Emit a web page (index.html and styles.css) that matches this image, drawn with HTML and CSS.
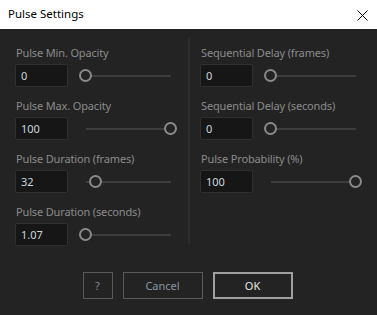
FILE: index.html
```html
<!DOCTYPE html>
<html lang="en">
<head>
  <meta charset="UTF-8" />
  <title>Pulse Settings</title>
  <link rel="stylesheet" href="styles.css">
</head>
<body>
  <div class="dialog">
    <div class="titlebar">
      <span class="title">Pulse Settings</span>
      <svg class="close" width="11" height="11" viewBox="0 0 11 11">
        <path d="M0.5 0.5 L10.5 10.5 M10.5 0.5 L0.5 10.5" stroke="#000" stroke-width="1" fill="none"/>
      </svg>
    </div>

    <div class="content">
      <div class="columns">
        <div class="column">
          <div class="field">
            <label>Pulse Min. Opacity</label>
            <div class="control">
              <input class="value" type="text" value="0">
              <div class="slider"><span class="thumb" style="left: calc((100% - 13px) * 0)"></span></div>
            </div>
          </div>
          <div class="field">
            <label>Pulse Max. Opacity</label>
            <div class="control">
              <input class="value" type="text" value="100">
              <div class="slider"><span class="thumb" style="left: calc((100% - 13px) * 1)"></span></div>
            </div>
          </div>
          <div class="field">
            <label>Pulse Duration (frames)</label>
            <div class="control">
              <input class="value" type="text" value="32">
              <div class="slider"><span class="thumb" style="left: calc((100% - 13px) * 0.118)"></span></div>
            </div>
          </div>
          <div class="field">
            <label>Pulse Duration (seconds)</label>
            <div class="control">
              <input class="value" type="text" value="1.07">
              <div class="slider"><span class="thumb" style="left: calc((100% - 13px) * 0)"></span></div>
            </div>
          </div>
        </div>

        <div class="divider"></div>

        <div class="column">
          <div class="field">
            <label>Sequential Delay (frames)</label>
            <div class="control">
              <input class="value" type="text" value="0">
              <div class="slider"><span class="thumb" style="left: calc((100% - 13px) * 0)"></span></div>
            </div>
          </div>
          <div class="field">
            <label>Sequential Delay (seconds)</label>
            <div class="control">
              <input class="value" type="text" value="0">
              <div class="slider"><span class="thumb" style="left: calc((100% - 13px) * 0)"></span></div>
            </div>
          </div>
          <div class="field">
            <label>Pulse Probability (%)</label>
            <div class="control">
              <input class="value" type="text" value="100">
              <div class="slider"><span class="thumb" style="left: calc((100% - 13px) * 1)"></span></div>
            </div>
          </div>
        </div>
      </div>

      <div class="buttons">
        <button class="btn btn-help">?</button>
        <button class="btn btn-cancel">Cancel</button>
        <button class="btn btn-ok">OK</button>
      </div>
    </div>
  </div>
</body>
</html>
```

FILE: styles.css
```css
html, body {
  margin: 0;
  padding: 0;
  background: #232323;
}
body {
  font-family: 'Noto Sans', 'Open Sans', sans-serif;
  font-size: 11px;
  width: 377px;
  height: 315px;
  overflow: hidden;
}
.dialog {
  display: flex;
  flex-direction: column;
  height: 100%;
}
.titlebar {
  height: 29px;
  background: #ffffff;
  display: flex;
  align-items: center;
  justify-content: space-between;
  padding: 0 9px 0 8px;
}
.title {
  color: #000;
  font-size: 11.5px;
  line-height: 16px;
  margin-top: -1px;
}
.close {
  display: block;
  margin-top: 1px;
}
.content {
  background: #232323;
  padding: 16px 15px 0 15px;
}
.columns {
  display: flex;
  align-items: flex-start;
}
.column {
  width: 162px;
  display: flex;
  flex-direction: column;
  gap: 11px;
}
.divider {
  width: 2px;
  background: #2d2d2d;
  align-self: stretch;
  margin: -7px 10px 2px 11px;
}
.field label {
  display: block;
  color: #8b8b8b;
  font-size: 11px;
  letter-spacing: -0.15px;
  line-height: 16px;
  height: 16px;
  margin-bottom: 3px;
  padding-left: 1px;
  white-space: nowrap;
}
.control {
  display: flex;
  align-items: center;
  gap: 11px;
}
.value {
  box-sizing: border-box;
  width: 53px;
  height: 23px;
  margin: 0;
  padding: 0 5px;
  background: #161616;
  border: 1px solid #303030;
  border-radius: 2px;
  color: #cdd5de;
  font-family: inherit;
  font-size: 11px;
  outline: none;
}
.slider {
  position: relative;
  flex: 1;
  height: 23px;
}
.slider::before {
  content: "";
  position: absolute;
  left: 7px;
  right: 6px;
  top: 11px;
  height: 2px;
  background: #3d3d3d;
}
.thumb {
  position: absolute;
  top: 5px;
  box-sizing: border-box;
  width: 13px;
  height: 13px;
  border: 2px solid #8a8a8a;
  border-radius: 50%;
  background: #232323;
}
.buttons {
  display: flex;
  justify-content: center;
  gap: 10px;
  margin-top: 26px;
  padding-right: 2px;
}
.btn {
  box-sizing: border-box;
  height: 27px;
  background: #232323;
  font-family: inherit;
  font-size: 11px;
  padding: 0;
  cursor: pointer;
}
.btn-help {
  width: 30px;
  border: 1px solid #5a5a5a;
  color: #7f8a96;
}
.btn-cancel {
  width: 80px;
  border: 1px solid #5a5a5a;
  color: #8a96a2;
}
.btn-ok {
  width: 80px;
  border: 2px solid #a0a0a0;
  color: #e6e6e6;
}
```
